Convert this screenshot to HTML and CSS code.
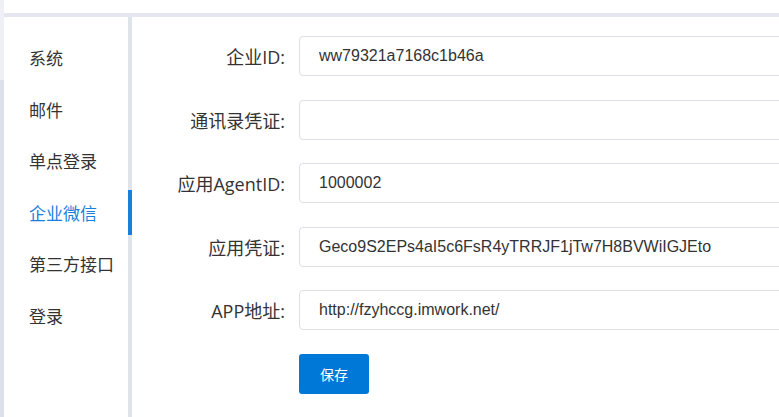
FILE: index.html
```html
<!DOCTYPE html>
<html lang="zh-CN">
<head>
    <meta charset="UTF-8">
    <meta name="viewport" content="width=device-width, initial-scale=1.0">
    <title>企业微信设置</title>
    <link rel="stylesheet" href="styles.css">
</head>
<body>
    <div class="edge"></div>
    <div class="main">
        <div class="topbar"></div>
        <div class="band"></div>
        <div class="panel">
            <!-- 左侧设置菜单 -->
            <ul class="side-menu">
                <li>系统</li>
                <li>邮件</li>
                <li>单点登录</li>
                <li class="active">企业微信</li>
                <li>第三方接口</li>
                <li>登录</li>
            </ul>

            <!-- 企业微信配置表单 -->
            <form class="settings">
                <div class="row">
                    <label>企业ID:</label>
                    <input type="text" value="ww79321a7168c1b46a">
                </div>
                <div class="row">
                    <label>通讯录凭证:</label>
                    <input type="text" value="">
                </div>
                <div class="row">
                    <label>应用AgentID:</label>
                    <input type="text" value="1000002">
                </div>
                <div class="row">
                    <label>应用凭证:</label>
                    <input type="text" value="Geco9S2EPs4aI5c6FsR4yTRRJF1jTw7H8BVWiIGJEto">
                </div>
                <div class="row">
                    <label>APP地址:</label>
                    <input type="text" value="http://fzyhccg.imwork.net/">
                </div>
                <div class="row">
                    <label></label>
                    <button type="button" class="save-button">保存</button>
                </div>
            </form>
        </div>
    </div>
</body>
</html>
```

FILE: styles.css
```css
/* 页面整体 */
body {
    margin: 0;
    display: flex;
    height: 100vh;
    overflow: hidden;
    background: #ffffff;
    font-family: "Microsoft YaHei", "Noto Sans CJK SC", sans-serif;
    color: #333;
}

/* 左边缘的细条 */
.edge {
    width: 4px;
    flex-shrink: 0;
    background: linear-gradient(#eef0f5 0, #eef0f5 80px, #dbe0e9 80px);
}

.main {
    flex: 1;
    display: flex;
    flex-direction: column;
    min-width: 0;
}

.topbar {
    height: 13px;
    background: #ffffff;
}

.band {
    height: 4px;
    background: #e4e7ef;
}

.panel {
    flex: 1;
    display: flex;
}

/* 左侧菜单 */
.side-menu {
    list-style: none;
    margin: 0;
    padding: 18px 0 0 0;
    width: 124px;
    flex-shrink: 0;
    border-right: 4px solid #dfe3ea;
    display: flex;
    flex-direction: column;
    gap: 6.6px;
}

.side-menu li {
    position: relative;
    height: 45px;
    line-height: 45px;
    padding-left: 25px;
    font-size: 17px;
    color: #333;
}

.side-menu li.active {
    color: #1a7fdc;
}

/* 当前菜单的蓝色指示条 */
.side-menu li.active::after {
    content: "";
    position: absolute;
    top: 0;
    right: -4px;
    width: 4px;
    height: 45px;
    background: #1a7fdc;
}

/* 表单 */
.settings {
    flex: 1;
    padding-top: 19px;
    display: flex;
    flex-direction: column;
    gap: 23.5px;
}

.row {
    display: flex;
    align-items: center;
    gap: 14px;
}

.row label {
    width: 153px;
    flex-shrink: 0;
    text-align: right;
    font-family: "Open Sans", "Noto Sans CJK SC", sans-serif;
    font-size: 18px;
    color: #333;
}

.row input {
    width: 520px;
    flex-shrink: 0;
    height: 40px;
    box-sizing: border-box;
    padding: 0 19px;
    border: 1px solid #dcdfe6;
    border-radius: 4px;
    font-family: "Liberation Sans", Arial, sans-serif;
    font-size: 16px;
    color: #333;
    outline: none;
}

.save-button {
    width: 70px;
    height: 40px;
    border: none;
    border-radius: 3px;
    background: #0078d7;
    color: #ffffff;
    font-family: "Microsoft YaHei", "Noto Sans CJK SC", sans-serif;
    font-size: 14px;
    cursor: pointer;
}
```
